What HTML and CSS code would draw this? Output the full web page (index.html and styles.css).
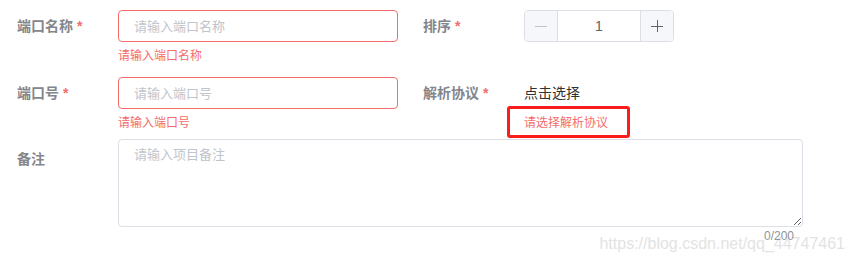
FILE: index.html
```html
<!DOCTYPE html>
<html lang="zh">
<head>
<meta charset="utf-8">
<title>端口表单</title>
<link rel="stylesheet" href="styles.css">
</head>
<body>
<div class="form">
  <div class="row row-1">
    <div class="item">
      <label class="label req">端口名称</label>
      <div class="content">
        <input class="input is-error" type="text" placeholder="请输入端口名称">
        <div class="error">请输入端口名称</div>
      </div>
    </div>
    <div class="item">
      <label class="label req">排序</label>
      <div class="content">
        <div class="stepper">
          <span class="step minus">
            <svg width="12" height="12" viewBox="0 0 12 12"><path d="M0 6.5h12" stroke="#c0c4cc" stroke-width="1"/></svg>
          </span>
          <span class="step-value">1</span>
          <span class="step plus">
            <svg width="12" height="12" viewBox="0 0 12 12"><path d="M0 6.5h12M6.5 0v12" stroke="#606266" stroke-width="1"/></svg>
          </span>
        </div>
      </div>
    </div>
  </div>
  <div class="row row-2">
    <div class="item">
      <label class="label req">端口号</label>
      <div class="content">
        <input class="input is-error" type="text" placeholder="请输入端口号">
        <div class="error">请输入端口号</div>
      </div>
    </div>
    <div class="item">
      <label class="label req">解析协议</label>
      <div class="content">
        <div class="pick">点击选择</div>
        <div class="error highlight">请选择解析协议<span class="mark"></span></div>
      </div>
    </div>
  </div>
  <div class="item full">
    <label class="label note">备注</label>
    <div class="content">
      <textarea class="textarea" placeholder="请输入项目备注"></textarea>
      <div class="count">0/200</div>
    </div>
  </div>
  <div class="watermark">https://blog.csdn.net/qq_44747461</div>
</div>
</body>
</html>
```
FILE: styles.css
```css
html, body {
  margin: 0;
  padding: 0;
  background: #fff;
}
body {
  font-family: "Liberation Sans", "Noto Sans CJK SC", sans-serif;
  font-size: 14px;
  color: #606266;
}
.form {
  position: relative;
  width: 851px;
  height: 262px;
  box-sizing: border-box;
  padding: 10px 0 0 17px;
  overflow: hidden;
}
.row {
  display: grid;
  grid-template-columns: 406px auto;
}
.row-1 { margin-bottom: 15px; }
.row-2 { margin-bottom: 10px; }
.item {
  display: flex;
  align-items: flex-start;
}
.label {
  width: 101px;
  flex: none;
  line-height: 32px;
  font-size: 14px;
  font-weight: 700;
  color: #84868b;
}
.label.req::after {
  content: "*";
  color: #f56c6c;
  margin-left: 4px;
}
.label.note {
  padding-top: 4px;
}
.content {
  position: relative;
  display: flex;
  flex-direction: column;
  align-items: flex-start;
}
.input {
  box-sizing: border-box;
  width: 280px;
  height: 32px;
  padding: 0 15px;
  border: 1px solid #dcdfe6;
  border-radius: 4px;
  font-family: inherit;
  font-size: 13px;
  color: #606266;
  outline: none;
}
.input.is-error {
  border-color: #f56c6c;
}
.input::placeholder,
.textarea::placeholder {
  color: #c0c4cc;
}
.error {
  position: relative;
  margin-top: 8px;
  font-size: 12px;
  line-height: 12px;
  color: #f56c6c;
}
.pick {
  line-height: 32px;
  font-size: 14px;
  color: #303133;
}
.mark {
  position: absolute;
  left: -17px;
  top: -11px;
  width: 123px;
  height: 32px;
  box-sizing: border-box;
  border: 3px solid #fb1c1c;
  border-radius: 3px;
}
.stepper {
  display: flex;
  box-sizing: border-box;
  width: 150px;
  height: 32px;
  border: 1px solid #dcdfe6;
  border-radius: 4px;
  overflow: hidden;
}
.step {
  width: 32px;
  flex: none;
  display: flex;
  align-items: center;
  justify-content: center;
  background: #f5f7fa;
}
.step.minus { border-right: 1px solid #dcdfe6; }
.step.plus { border-left: 1px solid #dcdfe6; }
.step-value {
  flex: 1;
  text-align: center;
  line-height: 30px;
  font-size: 14px;
  color: #606266;
}
.textarea {
  display: block;
  box-sizing: border-box;
  width: 685px;
  height: 88px;
  padding: 5px 15px;
  border: 1px solid #dcdfe6;
  border-radius: 4px;
  font-family: inherit;
  font-size: 13px;
  line-height: 1.5;
  color: #606266;
  outline: none;
  margin: 0;
}
.count {
  align-self: stretch;
  text-align: right;
  padding-right: 9px;
  margin-top: 3px;
  font-size: 12px;
  line-height: 12px;
  color: #909399;
  position: relative;
  z-index: 1;
}
.watermark {
  position: absolute;
  right: 6px;
  top: 235px;
  font-family: "Liberation Sans", sans-serif;
  font-size: 16px;
  line-height: 18px;
  color: #e3e3e3;
  white-space: nowrap;
}
```
